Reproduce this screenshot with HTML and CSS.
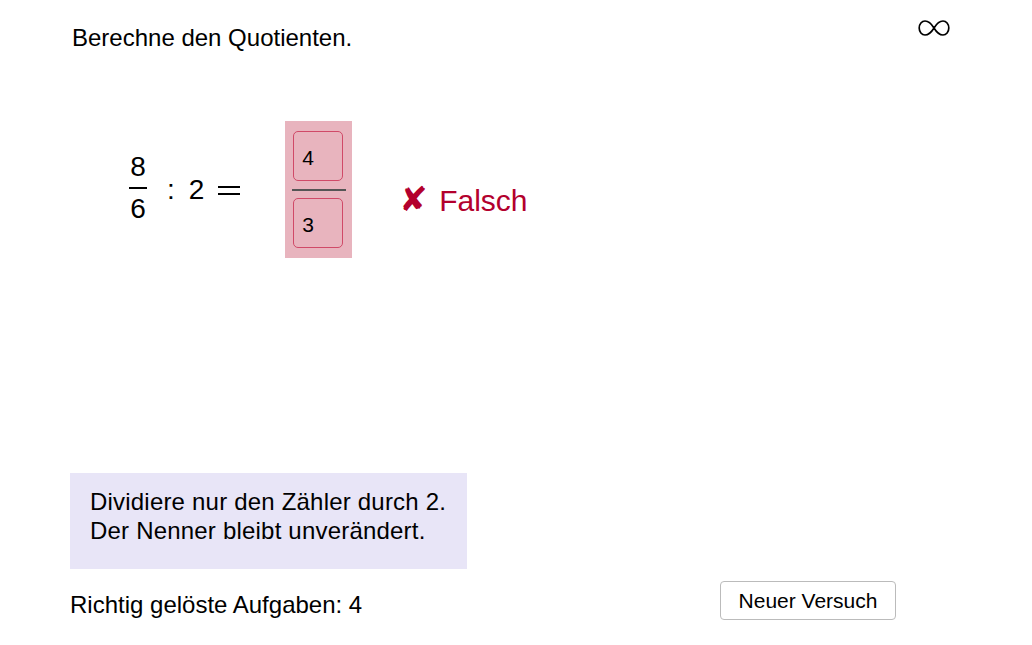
FILE: index.html
```html
<!DOCTYPE html>
<html lang="de">
<head>
    <meta charset="UTF-8">
    <title>Quotient</title>
    <link rel="stylesheet" href="styles.css">
</head>
<body>

<div class="app">
    <div class="top">
        <p class="task-title">Berechne den Quotienten.</p>
        <svg class="infinity" width="32" height="18" viewBox="0 0 32 18" aria-label="unendlich">
            <path d="M16 9 C13 4, 10 2, 7 2 C3.8 2, 1.2 5, 1.2 9 C1.2 13, 3.8 16, 7 16 C10 16, 13 14, 16 9 C19 4, 22 2, 25 2 C28.2 2, 30.8 5, 30.8 9 C30.8 13, 28.2 16, 25 16 C22 16, 19 14, 16 9 Z" fill="none" stroke="#000" stroke-width="1.7"/>
        </svg>
    </div>

    <div class="task">
        <div class="frac">
            <span>8</span>
            <span class="bar"></span>
            <span>6</span>
        </div>
        <div class="op">
            <span>:</span>
            <span>2</span>
            <span class="eq"></span>
        </div>
        <div class="answer wrong">
            <div class="field">4</div>
            <span class="answer-bar"></span>
            <div class="field">3</div>
        </div>
        <div class="feedback"><span class="cross">&#10008;</span> Falsch</div>
    </div>

    <div class="hint">
        Dividiere nur den Zähler durch 2.<br>
        Der Nenner bleibt unverändert.
    </div>

    <div class="bottom">
        <p class="score">Richtig gelöste Aufgaben: 4</p>
        <button class="btn">Neuer Versuch</button>
    </div>
</div>

</body>
</html>
```

FILE: styles.css
```css
/* reset */
*{margin: 0;padding: 0;box-sizing: border-box;}
body{font-family: "Liberation Sans", "DejaVu Sans", sans-serif;color: #000;background: #fff;}

/* layout */
.app{height: 645px;padding: 14px 0 0 70px;display: flex;flex-direction: column;}
.top{display: flex;justify-content: space-between;align-items: flex-start;width: 880px;}
.task-title{font-size: 24px;margin: 10px 0 0 2px;}
.infinity{margin-top: 5px;}

/* aufgabe */
.task{display: flex;align-items: center;margin-top: 69px;padding-left: 59px;}
.frac{display: flex;flex-direction: column;align-items: center;font-size: 28px;line-height: 30px;margin-bottom: 4px;}
.frac .bar{width: 18px;height: 2px;background: #000;margin: 5px 0 5px;}
.op{display: flex;align-items: center;gap: 14px;font-size: 28px;margin-left: 20px;}
.op .eq{width: 22px;height: 9px;border-top: 2px solid #000;border-bottom: 2px solid #000;margin-top: 2px;}
.answer{width: 67px;height: 137px;margin-left: 45px;padding: 10px 8px;background: #e8b4be;display: flex;flex-direction: column;justify-content: space-between;}
.answer .field{width: 50px;height: 50px;border: 1px solid #d04a68;border-radius: 5px;font-size: 21px;padding: 14px 0 0 8px;}
.answer .answer-bar{height: 2px;background: #555;margin: 0 -2px 0 -1px;}
.feedback{font-size: 30px;color: #b3002d;margin-left: 47px;margin-top: 18px;}
.cross{font-family: "DejaVu Sans", sans-serif;font-size: 34px;margin-right: 3px;}

/* hinweis */
.hint{margin-top: auto;width: 397px;height: 96px;padding: 14px 20px;background: #e8e5f7;font-size: 24px;line-height: 29px;letter-spacing: 0.2px;}

/* unten */
.bottom{display: flex;justify-content: space-between;align-items: center;width: 826px;margin: 12px 0 25px;}
.score{font-size: 24px;padding-top: 8px;}
.btn{font-family: inherit;font-size: 21px;height: 39px;width: 176px;background: #fff;border: 1px solid #bbb;border-radius: 4px;color: #000;}
```
